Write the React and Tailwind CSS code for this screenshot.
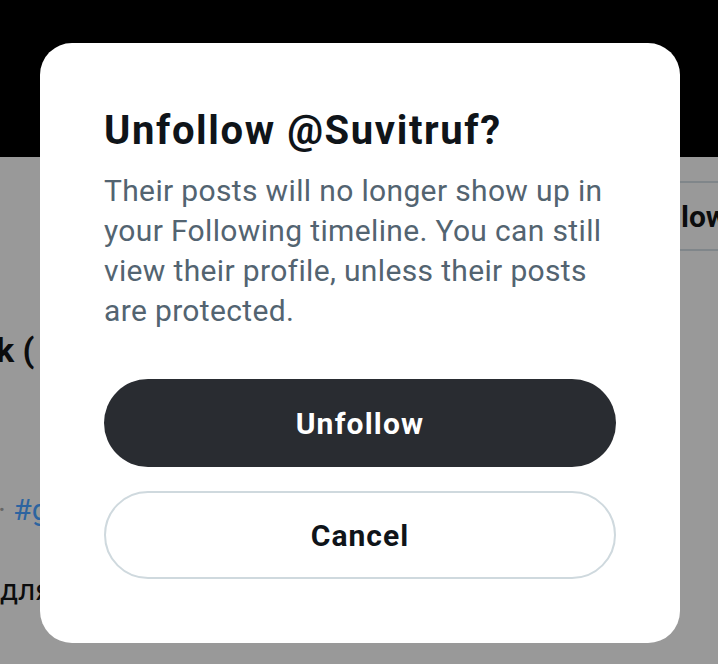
import React from 'react';

const font = { fontFamily: 'Roboto, "Liberation Sans", sans-serif' };

const Backdrop = () => (
  <div className="absolute inset-0 flex flex-col">
    <div className="h-[157px] bg-black shrink-0" />
    <div className="relative flex-1 bg-[#999999]">
      {/* follow button behind the dialog, only its edge shows */}
      <div className="absolute left-[680px] top-[24px] h-[70px] w-[80px] border-y-2 border-[#80868a] flex items-center">
        <span className="pl-[1px] text-[30px] font-bold text-[#0b0c0d]">low</span>
      </div>
      <div className="absolute left-[-4px] top-[176px] text-[34px] font-bold text-[#0b0c0d] leading-none">k (</div>
      <div className="absolute left-[-2px] top-[338px] text-[30px] text-[#2c64a0] leading-none">
        <span className="text-[#666]">·</span> #g
      </div>
      <div className="absolute left-[0px] top-[418px] text-[30px] text-[#0b0c0d] leading-none">для</div>
    </div>
  </div>
);

export default function App() {
  return (
    <div className="relative w-[718px] h-[664px] overflow-hidden" style={font}>
      <Backdrop />
      <div className="absolute left-[40px] top-[43px] w-[640px] bg-white rounded-[32px] p-16 flex flex-col">
        <h2 className="text-[40px] leading-[48px] font-bold text-[#0f1419] tracking-[1.6px]">Unfollow @Suvitruf?</h2>
        <p className="mt-[16px] text-[30px] leading-[40px] text-[#536471] tracking-[0.35px]">
          Their posts will no longer show up in your Following timeline. You can still view their profile, unless their posts are protected.
        </p>
        <div className="mt-[48px] flex flex-col gap-6">
          <button className="h-[88px] rounded-full bg-[#292c31] text-white text-[30px] font-bold tracking-[1.2px]">Unfollow</button>
          <button className="h-[88px] rounded-full border-2 border-[#cfd9de] bg-white text-[#0f1419] text-[30px] font-bold tracking-[1px]">Cancel</button>
        </div>
      </div>
    </div>
  );
}
